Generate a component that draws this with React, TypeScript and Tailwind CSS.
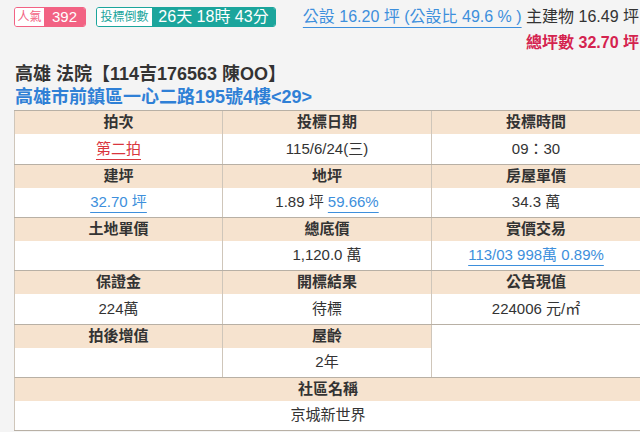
import React from "react";

const FONT = {
  fontFamily: '"Liberation Sans", Arial, "Noto Sans CJK TC", sans-serif',
};

type Cell = { h: string; v: React.ReactNode };

const Link = ({ children, color }: { children: React.ReactNode; color: string }) => (
  <span className={`underline underline-offset-[5px] decoration-1 ${color}`}>{children}</span>
);

function Col({ cell, w, dataH }: { cell: Cell | null; w: string; dataH: string }) {
  if (!cell) {
    return <div className={`${w} border-l border-[#cfc6ba] bg-white`} />;
  }
  return (
    <div className={`${w} flex flex-col border-l border-[#cfc6ba]`}>
      <div className="h-[23px] bg-[#f6e3cf] flex items-center justify-center font-bold text-[#333]">
        {cell.h}
      </div>
      <div className={`${dataH} bg-white flex items-center justify-center text-[#333]`}>{cell.v}</div>
    </div>
  );
}

function Group({ cells, dataH }: { cells: (Cell | null)[]; dataH: string }) {
  return (
    <div className="flex border-t border-[#b8b0a5]">
      <Col cell={cells[0]} w="w-[208px]" dataH={dataH} />
      <Col cell={cells[1]} w="w-[209px]" dataH={dataH} />
      <Col cell={cells[2]} w="w-[209px]" dataH={dataH} />
    </div>
  );
}

export default function App() {
  const blue = "text-[#3d8fdc] decoration-[#3d8fdc]";
  return (
    <div
      className="w-[640px] h-[432px] overflow-hidden bg-[#f4f4f4] relative"
      style={FONT}
    >
      <div className="pl-[14px] pt-[7px] flex items-start whitespace-nowrap">
        <div className="flex h-[20px] w-[72px] rounded-[3px] overflow-hidden border border-[#f26283]">
          <div className="w-[29px] bg-white flex items-center justify-center text-[12px] text-[#f26283]">人氣</div>
          <div className="flex-1 bg-[#f26283] flex items-center justify-center text-[15px] text-white">392</div>
        </div>
        <div className="ml-[10px] flex h-[20px] w-[180px] rounded-[3px] overflow-hidden border border-[#1ba59c]">
          <div className="w-[55px] bg-white flex items-center justify-center text-[12px] text-[#1ba59c]">投標倒數</div>
          <div className="flex-1 bg-[#1ba59c] flex items-center justify-center text-[16px] text-white">26天 18時 43分</div>
        </div>
        <div className="flex-1 flex flex-col items-end mr-[1px] text-[16px]">
          <div className="h-[22px] leading-[22px] mt-[-1px]">
            <Link color={blue}>公設 16.20 坪 (公設比 49.6 % )</Link>
            <span className="text-[#333]"> 主建物 16.49 坪</span>
          </div>
          <div className="mt-[4px] h-[22px] leading-[22px] font-bold text-[#d4234f]">總坪數 32.70 坪</div>
        </div>
      </div>

      <div className="pl-[15px] mt-[9px] text-[18px] font-bold text-[#333] leading-[22px]">
        高雄 法院【114吉176563 陳OO】
      </div>
      <div className="pl-[15px] mt-[1px] text-[18px] font-bold text-[#2f80d6] leading-[22px]">
        高雄市前鎮區一心二路195號4樓&lt;29&gt;
      </div>

      <div className="ml-[14px] mt-[2px] w-[627px] border-b border-[#b8b0a5] text-[15px]">
        <Group
          dataH="h-[30px]"
          cells={[
            { h: "拍次", v: <Link color="text-[#d9363e] decoration-[#d9363e]">第二拍</Link> },
            { h: "投標日期", v: "115/6/24(三)" },
            { h: "投標時間", v: "09：30" },
          ]}
        />
        <Group
          dataH="h-[29px]"
          cells={[
            { h: "建坪", v: <Link color={blue}>32.70 坪</Link> },
            { h: "地坪", v: <span>1.89 坪 <Link color={blue}>59.66%</Link></span> },
            { h: "房屋單價", v: "34.3 萬" },
          ]}
        />
        <Group
          dataH="h-[29px]"
          cells={[
            { h: "土地單價", v: "" },
            { h: "總底價", v: "1,120.0 萬" },
            { h: "實價交易", v: <Link color={blue}>113/03 998萬 0.89%</Link> },
          ]}
        />
        <Group
          dataH="h-[30px]"
          cells={[
            { h: "保證金", v: "224萬" },
            { h: "開標結果", v: "待標" },
            { h: "公告現值", v: "224006 元/㎡" },
          ]}
        />
        <Group
          dataH="h-[29px]"
          cells={[
            { h: "拍後增值", v: "" },
            { h: "屋齡", v: "2年" },
            null,
          ]}
        />
        <div className="flex flex-col border-t border-[#b8b0a5] border-l border-l-[#cfc6ba]">
          <div className="h-[23px] bg-[#f6e3cf] flex items-center justify-center font-bold text-[#333]">社區名稱</div>
          <div className="h-[29px] bg-white flex items-center justify-center text-[#333]">京城新世界</div>
        </div>
      </div>
    </div>
  );
}
